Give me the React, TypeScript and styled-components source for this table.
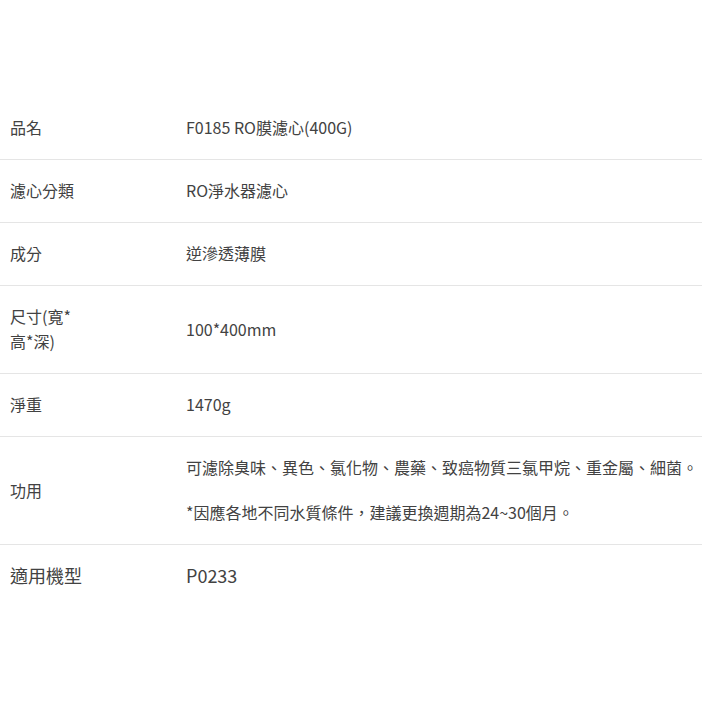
import React from 'react';
import styled, { createGlobalStyle } from 'styled-components';

const GlobalStyle = createGlobalStyle`
  html, body {
    margin: 0;
    padding: 0;
    background: #fff;
  }
  body {
    font-family: "Noto Sans CJK TC", "Noto Sans", sans-serif;
    color: #424242;
  }
`;

const Page = styled.div`
  width: 702px;
  padding-top: 97px;
`;

const SpecTable = styled.div`
  display: flex;
  flex-direction: column;
`;

const Row = styled.div`
  display: grid;
  grid-template-columns: 186px 1fr;
  align-items: center;
  padding: 18px 0 19px;
  border-bottom: 1px solid #e5e5e5;

  &:last-child {
    border-bottom: none;
  }
`;

const Label = styled.div<{ $large?: boolean }>`
  padding-left: 10px;
  width: 72px;
  font-size: ${(p) => (p.$large ? '18px' : '16px')};
  line-height: 25px;
`;

const Value = styled.div<{ $large?: boolean }>`
  font-size: ${(p) => (p.$large ? '18px' : '16px')};
  line-height: 25px;
  white-space: nowrap;
`;

const Para = styled.p`
  margin: 0;

  & + & {
    margin-top: 20px;
  }
`;

type Spec = { label: string; value: React.ReactNode; large?: boolean };

const specs: Spec[] = [
  { label: '品名', value: 'F0185 RO膜濾心(400G)' },
  { label: '濾心分類', value: 'RO淨水器濾心' },
  { label: '成分', value: '逆滲透薄膜' },
  { label: '尺寸(寬*高*深)', value: '100*400mm' },
  { label: '淨重', value: '1470g' },
  {
    label: '功用',
    value: (
      <>
        <Para>可濾除臭味、異色、氯化物、農藥、致癌物質三氯甲烷、重金屬、細菌。</Para>
        <Para>*因應各地不同水質條件，建議更換週期為24~30個月。</Para>
      </>
    ),
  },
  { label: '適用機型', value: 'P0233', large: true },
];

function App() {
  return (
    <Page>
      <GlobalStyle />
      <SpecTable>
        {specs.map((s) => (
          <Row key={s.label}>
            <Label $large={s.large}>{s.label}</Label>
            <Value $large={s.large}>{s.value}</Value>
          </Row>
        ))}
      </SpecTable>
    </Page>
  );
}

export default App;
